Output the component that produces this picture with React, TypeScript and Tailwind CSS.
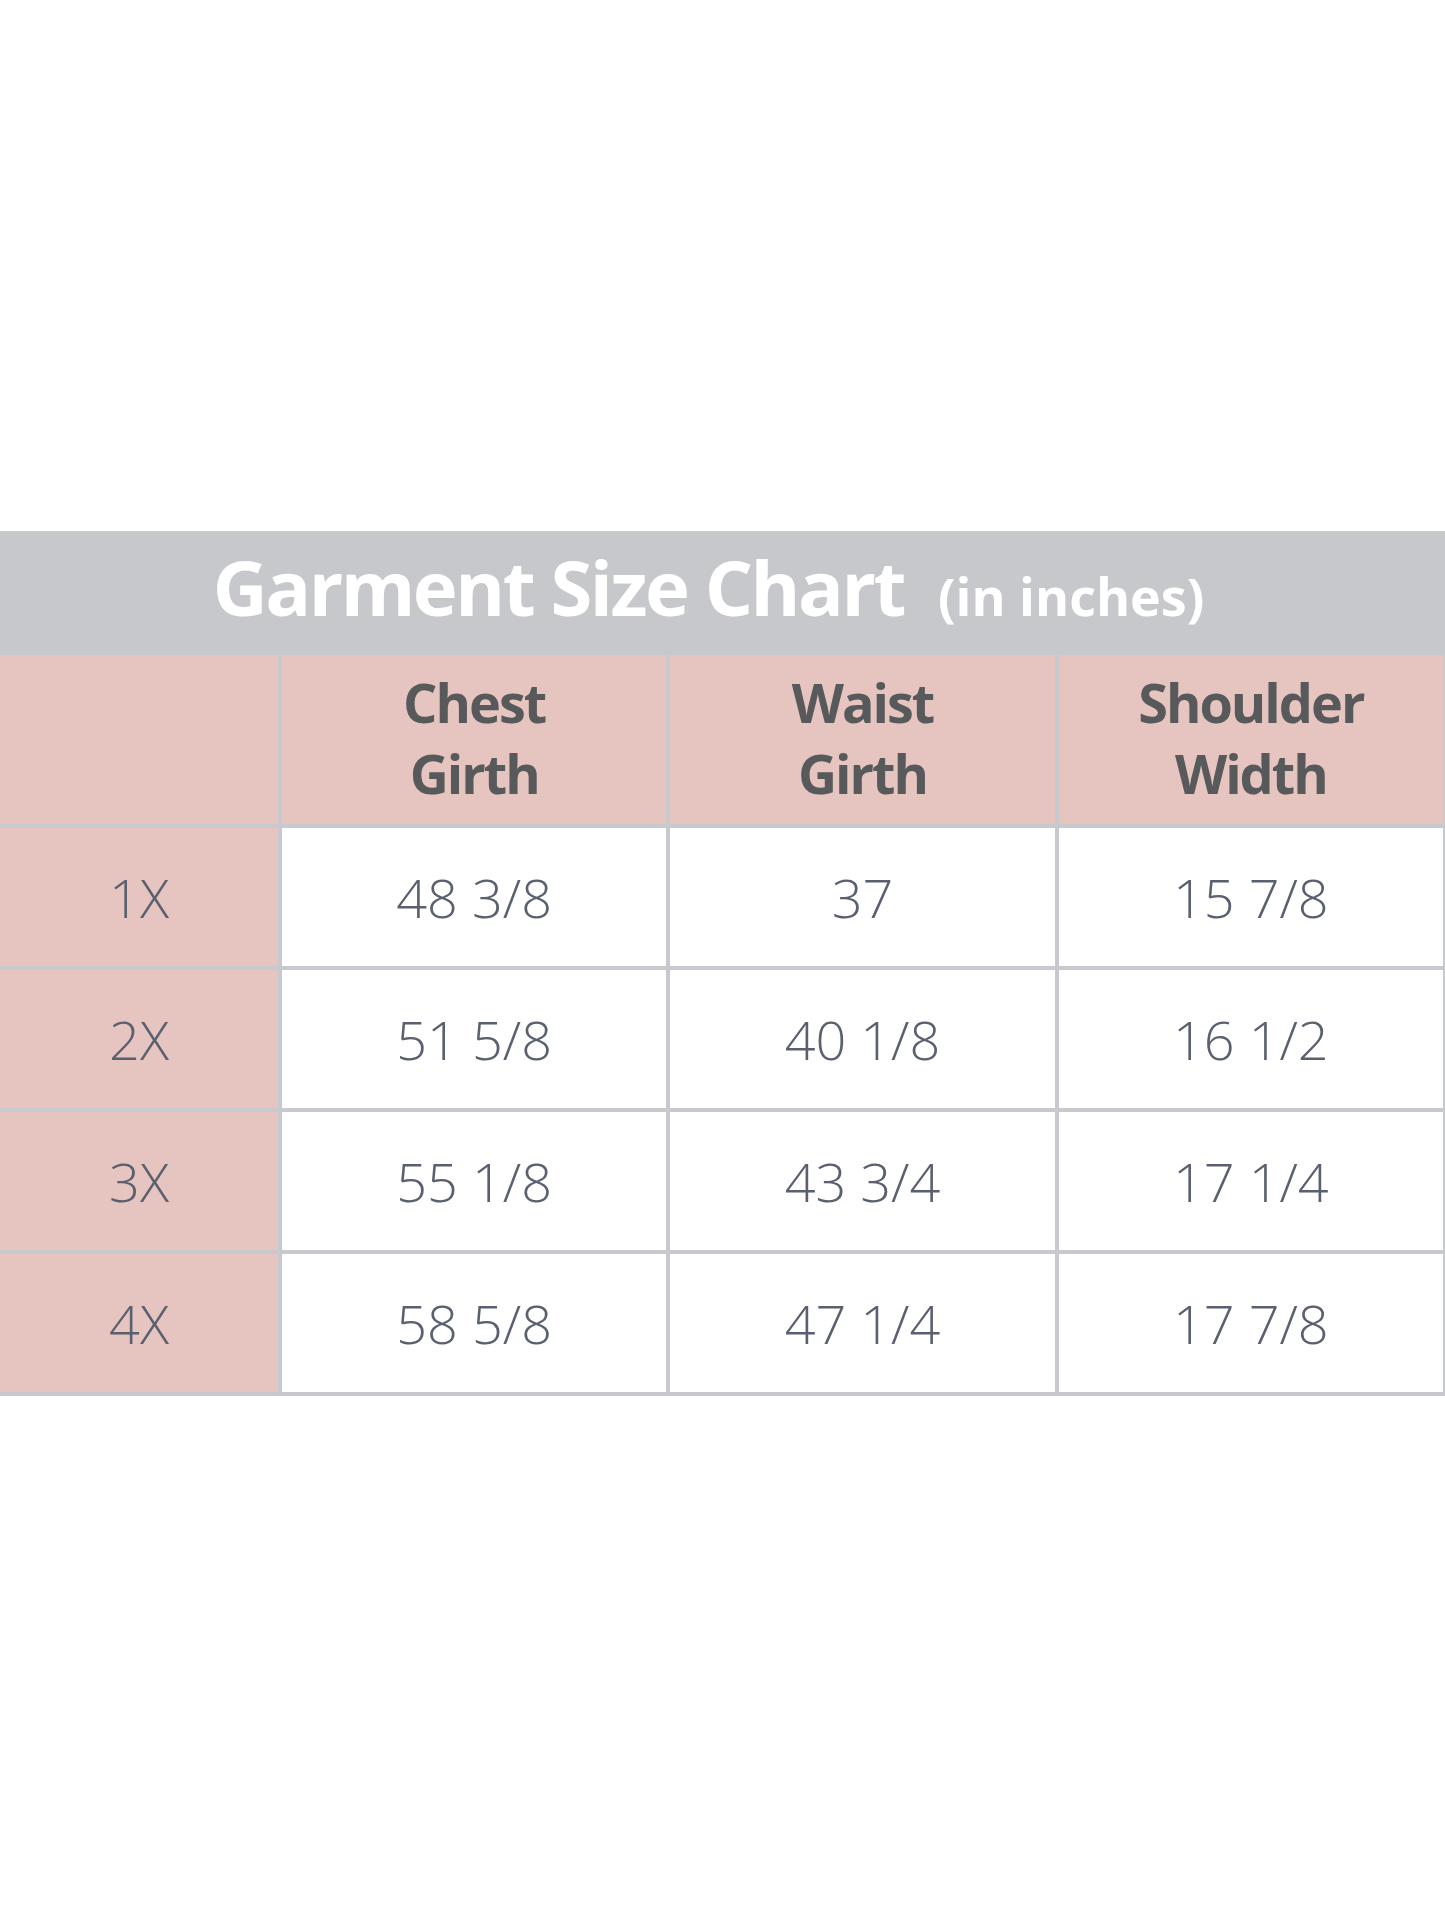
import React from "react";

const rows = [
  { size: "1X", chest: "48 3/8", waist: "37", shoulder: "15 7/8" },
  { size: "2X", chest: "51 5/8", waist: "40 1/8", shoulder: "16 1/2" },
  { size: "3X", chest: "55 1/8", waist: "43 3/4", shoulder: "17 1/4" },
  { size: "4X", chest: "58 5/8", waist: "47 1/4", shoulder: "17 7/8" },
];

function HeaderCell({ top, bottom }: { top?: string; bottom?: string }) {
  return (
    <div className="h-[169px] bg-[#e6c4bf] flex flex-col items-center justify-center pb-[4px] text-[54px] leading-[71px] font-bold tracking-[-2px] text-[#58595b]">
      {top && <span>{top}</span>}
      {bottom && <span>{bottom}</span>}
    </div>
  );
}

function DataCell({ value, pink }: { value: string; pink?: boolean }) {
  return (
    <div
      className={
        pink
          ? "h-[138px] bg-[#e6c4bf] flex items-center justify-center text-[54px] font-light text-[#5a6070]"
          : "h-[138px] bg-white flex items-center justify-center text-[54px] font-light text-[#5a6070]"
      }
    >
      {value}
    </div>
  );
}

export default function App() {
  return (
    <div
      className="w-[1445px] min-h-[1927px] bg-white pt-[531px]"
      style={{ fontFamily: '"Open Sans", "Noto Sans", sans-serif' }}
    >
      <div className="h-[124px] bg-[#c7c8cc] flex items-center justify-center pb-[12px]">
        <div className="flex items-baseline gap-[34px] text-white font-bold pr-[28px]">
          <span className="text-[76px] leading-none tracking-[-2.5px]">Garment Size Chart</span>
          <span className="text-[52px] leading-none">(in inches)</span>
        </div>
      </div>
      <div className="grid grid-cols-[278px_1fr_1fr_1fr] gap-[4px] bg-[#c8c9ce] pb-[4px] pr-[2px]">
        <HeaderCell />
        <HeaderCell top="Chest" bottom="Girth" />
        <HeaderCell top="Waist" bottom="Girth" />
        <HeaderCell top="Shoulder" bottom="Width" />
        {rows.map((r) => (
          <React.Fragment key={r.size}>
            <DataCell value={r.size} pink />
            <DataCell value={r.chest} />
            <DataCell value={r.waist} />
            <DataCell value={r.shoulder} />
          </React.Fragment>
        ))}
      </div>
    </div>
  );
}
